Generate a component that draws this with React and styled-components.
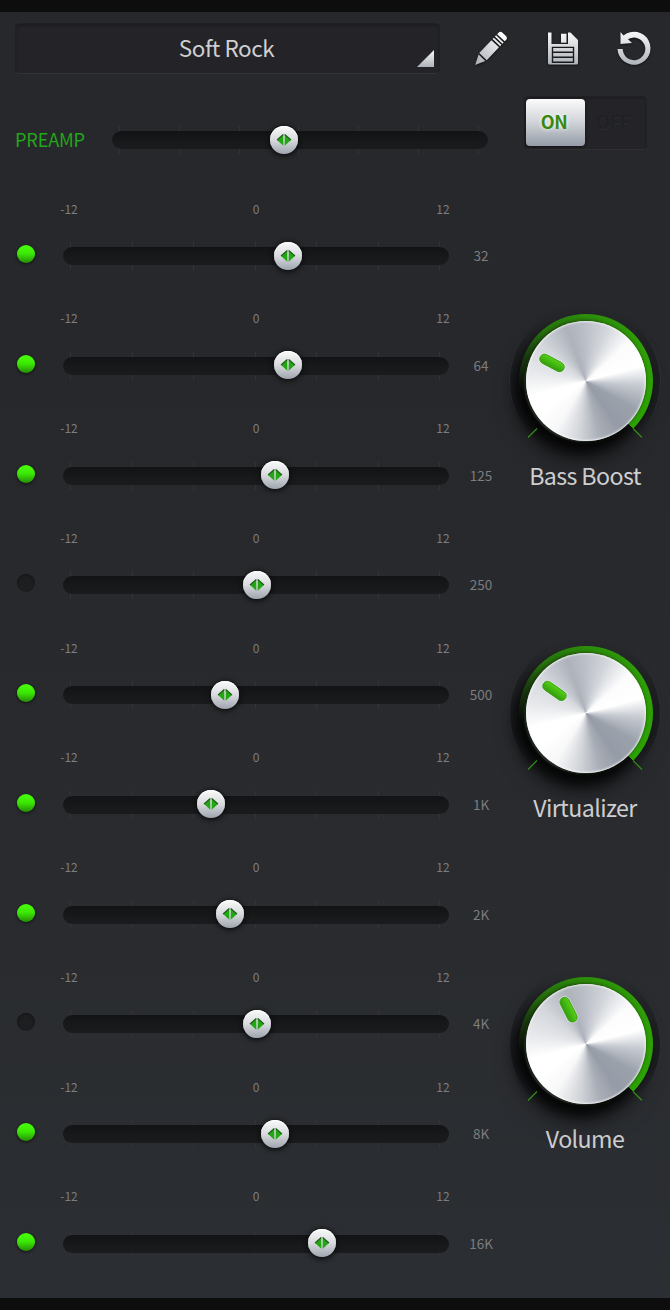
import React from "react";
import styled, { createGlobalStyle } from "styled-components";

const Global = createGlobalStyle`
  * { box-sizing: border-box; }
  body { margin: 0; background: #0d0d0d; }
`;

const Screen = styled.main`
  width: 670px;
  height: 1310px;
  display: flex;
  flex-direction: column;
  border-top: 12px solid #0d0d0d;
  border-bottom: 12px solid #0d0d0d;
  background: linear-gradient(#27282b, #27282b 30%, #2b2e32);
  background-clip: padding-box;
  font-family: "Noto Sans CJK SC", "Noto Sans", sans-serif;
  color: #cfcfd1;
  overflow: hidden;
`;

const Header = styled.header`
  display: flex;
  align-items: center;
  padding: 11px 19px 0 15px;
  height: 62px;
`;

const Preset = styled.button`
  display: grid;
  width: 425px;
  height: 51px;
  padding: 0;
  border: 1px solid #202024;
  border-bottom-color: #343438;
  border-radius: 5px;
  background: #242428;
  box-shadow: inset 0 2px 2px #1e1e21;
  color: inherit;
  font: 400 22.5px/46px "Noto Sans CJK SC", sans-serif;
  letter-spacing: -0.45px;
  text-align: center;
`;

const PresetName = styled.span`
  grid-area: 1 / 1;
  height: 49px;
  padding-right: 2px;
`;

const Corner = styled.svg`
  grid-area: 1 / 1;
  align-self: end;
  justify-self: end;
  margin: 0 5px 6px 0;
`;

const Actions = styled.div`
  display: flex;
  flex: 1;
  justify-content: space-between;
  padding-left: 34px;
`;

const Icon = styled.svg`
  display: block;
  overflow: visible;
  filter: drop-shadow(0 1px 1px #111);
`;

const Body = styled.div`
  display: flex;
  flex: 1;
`;

const Bands = styled.section`
  width: 506px;
  padding-top: 50px;
`;

const Side = styled.aside`
  flex: 1;
  padding-top: 22px;
`;

const PreampRow = styled.div`
  display: flex;
  align-items: center;
  height: 32px;
  padding-left: 15px;
`;

const PreampLabel = styled.span`
  width: 97px;
  margin-top: -2px;
  color: #23a61a;
  font-size: 18.2px;
  letter-spacing: -0.2px;
  line-height: 30px;
`;

const BandList = styled.div`
  padding-top: 40px;
`;

const Band = styled.div`
  display: grid;
  grid-template-columns: 63px 386px 57px;
  grid-template-rows: 32px 32px;
  row-gap: 12px;
  height: 109.76px;
`;

const Scale = styled.div`
  grid-column: 2;
  display: grid;
  grid-template-columns: 12px 1fr 12px;
  align-items: center;
  justify-items: center;
  height: 25px;
  color: #7c7d80;
  font-size: 12px;
  line-height: 16px;
  white-space: nowrap;
`;

const Led = styled.i`
  grid-row: 2;
  width: 18px;
  height: 18px;
  margin: 5px 0 0 17.4px;
  border-radius: 50%;
  background: ${(p) =>
    p.$on ? "linear-gradient(#45fb08 15%, #3be505 50%, #248d05)" : "#1d1e20"};
  box-shadow: ${(p) =>
    p.$on ? "0 1px 3px #111" : "inset 0 1px 2px #111214, 0 1px 0 #2d2e31"};
`;

const Freq = styled.span`
  grid-row: 2;
  grid-column: 3;
  justify-self: center;
  align-self: center;
  margin: -2px 0 0 7px;
  color: #7c7d80;
  font-size: 13.5px;
  line-height: 20px;
`;

const SliderBox = styled.div`
  grid-row: ${(p) => p.$row};
  display: grid;
  align-items: center;
  width: ${(p) => p.$width}px;
  height: 32px;
`;

const Ticks = styled.div`
  grid-area: 1 / 1;
  display: flex;
  justify-content: space-between;
  padding: 0 9px 0 7px;
`;

const Tick = styled.i`
  width: 1px;
  height: 28px;
  background: #323336;
`;

const Track = styled.div`
  grid-area: 1 / 1;
  height: 18px;
  border-radius: 9px;
  background: linear-gradient(#121315, #18191b 60%, #1a1b1d);
`;

const Thumb = styled.div`
  grid-area: 1 / 1;
  display: grid;
  place-items: center;
  width: 28px;
  height: 28px;
  margin-top: -1px;
  border-radius: 50%;
  background: linear-gradient(#fafafa, #d8dadd 50%, #9fa4ae);
  box-shadow: 0 1px 5px 1px #0b0c0d, inset 0 1px 0 #fff;
`;

const Switch = styled.div`
  display: flex;
  width: 123px;
  height: 54px;
  margin-left: 18px;
  padding: 3px 1px;
  border: 1px solid #202124;
  border-bottom-color: #303134;
  border-radius: 5px;
  background: #242428;
  box-shadow: inset 0 1px 2px #1d1d20;
`;

const SwitchSide = styled.span`
  width: 59px;
  height: 47px;
  margin-top: -1px;
  border-radius: 4px;
  font-size: 18px;
  font-weight: 700;
  letter-spacing: -0.3px;
  line-height: 45px;
  padding-right: 3px;
  text-align: center;
  color: ${(p) => (p.$active ? "#37880f" : "#202124")};
  background: ${(p) =>
    p.$active ? "linear-gradient(#fbfbfb, #d0d3d8 50%, #959ca7)" : "none"};
  box-shadow: ${(p) => (p.$active ? "0 1px 3px #111" : "none")};
  text-shadow: ${(p) => (p.$active ? "0 0 4px #fff" : "0 1px 0 #2c2d30")};
`;

const Knobs = styled.div`
  display: flex;
  flex-direction: column;
  padding-top: 155px;
`;

const KnobBlock = styled.figure`
  display: flex;
  flex-direction: column;
  align-items: center;
  height: 331.7px;
  margin: 0;
  padding-right: 7px;
`;

const Dial = styled.div`
  display: grid;
  place-items: center;
  width: 152px;
  height: 152px;
  > * { grid-area: 1 / 1; z-index: 1; }
`;

const Well = styled.div`
  width: 152px;
  height: 152px;
  border-radius: 50%;
  border: 1px solid #303236;
  background: #1d1e21;
  mask-image: conic-gradient(transparent 30deg, #000 85deg, #000 105deg, transparent 135deg, transparent 225deg, #000 255deg, #000 275deg, transparent 330deg);
`;

const Arc = styled.div`
  width: 134px;
  height: 134px;
  margin-left: 2px;
  border-radius: 50%;
  background: conic-gradient(#2c8f0a, #2f9e07 60deg, #2ba303 135deg, transparent 135.5deg, transparent 262deg, rgba(28, 74, 14, 0.7) 290deg, #27740c 320deg, #2c8f0a);
`;

const Shade = styled.div`
  width: 118px;
  height: 118px;
  border-radius: 50%;
  margin: 4px 4px 0 0;
  box-shadow: -2px 5px 12px 6px rgba(0, 0, 0, 0.75), -2px 12px 22px 4px rgba(0, 0, 0, 0.5);
`;

const Face = styled.div`
  width: 120px;
  height: 120px;
  margin-left: 2px;
  border-radius: 50%;
  background: conic-gradient(
    #bcc0c8, #d3d6db 22deg, #fcfcfd 48deg, #fff 75deg, #c5c9d0 95deg,
    #9ba1ab 120deg, #969ca7 145deg, #a8adb6 165deg, #cfd2d7 185deg,
    #f8f8f9 212deg, #fff 235deg, #fff 255deg, #e6e8eb 280deg,
    #d3d6db 310deg, #adb2bb 340deg, #bcc0c8
  );
  box-shadow: inset 0 0 2px 1px rgba(250, 250, 250, 0.8), -1px 0 4px #16240f;
`;

const Marks = styled.svg`
  width: 152px;
  height: 152px;
  overflow: visible;
`;

const KnobName = styled.figcaption`
  margin-top: 1px;
  padding-left: 1px;
  font-size: 23.2px;
  letter-spacing: -0.6px;
  line-height: 34px;
  white-space: nowrap;
`;

const bands = [
  ["32", 224.5],
  ["64", 224.5],
  ["125", 212],
  ["250", 193.5],
  ["500", 161.5],
  ["1K", 147.5],
  ["2K", 166.5],
  ["4K", 193.5],
  ["8K", 212],
  ["16K", 259],
];

const knobs = [
  ["Bass Boost", -62],
  ["Virtualizer", -55],
  ["Volume", -27],
];

function Slider({ width, at, row }) {
  return (
    <SliderBox $width={width} $row={row}>
      <Ticks>
        {Array.from({ length: 7 }, (_, i) => (
          <Tick key={i} />
        ))}
      </Ticks>
      <Track />
      <Thumb style={{ marginLeft: at - 14 }}>
        <svg width="16" height="12" viewBox="0 0 16 12">
          <path d="M7.300 .2v11.600L1 6zM8.700 .2v11.600L15 6z" fill="#23a614" />
          <path d="M7.300 .5 1 6M8.700 .5 15 6" stroke="#235a20" strokeWidth="1.100" />
        </svg>
      </Thumb>
    </SliderBox>
  );
}

function Knob({ name, angle }) {
  return (
    <KnobBlock>
      <Dial>
        <Well />
        <Shade />
        <Arc />
        <Face />
        <Marks viewBox="0 0 152 152">
          <defs>
            <linearGradient id="pill" x1="0" x2="1">
              <stop stopColor="#329d0b" />
              <stop offset="1" stopColor="#56d018" />
            </linearGradient>
          </defs>
          <path d="M19 132.500l9-9M124 123.500l9 9" stroke="#318c17" strokeWidth="1.200" />
          <g transform={`rotate(${angle} 77 76)`}>
            <rect x="71" y="23" width="12" height="29" rx="6" fill="#eef0f0" opacity=".55" />
            <rect x="72.200" y="24.200" width="9.600" height="26.600" rx="4.800" fill="url(#pill)" stroke="#3c9c17" strokeWidth=".8" />
          </g>
        </Marks>
      </Dial>
      <KnobName>{name}</KnobName>
    </KnobBlock>
  );
}

export default function App() {
  return (
    <>
      <Global />
      <Screen>
        <Header>
          <Preset>
            <PresetName>Soft Rock</PresetName>
            <Corner width="17" height="17" viewBox="0 0 17 17">
              <defs>
                <linearGradient id="metal" x2="0" y2="1">
                  <stop stopColor="#f8f8f8" />
                  <stop offset="1" stopColor="#aeb3ba" />
                </linearGradient>
              </defs>
              <path d="M17 0v17H0z" fill="url(#metal)" />
            </Corner>
          </Preset>
          <Actions>
            <Icon width="34" height="34" viewBox="0 0 34 34">
              <defs>
                <linearGradient id="pencil" gradientUnits="userSpaceOnUse" x1="0" y1="0" x2="0" y2="42">
                  <stop stopColor="#fff" />
                  <stop offset="1" stopColor="#a7abb2" />
                </linearGradient>
              </defs>
              <g transform="translate(30 2.500) rotate(43.500)" fill="url(#pencil)">
                <path d="M-5.200 4.500V2.500Q-5.200-.300-2-.300H2Q5.200-.300 5.200 2.500V4.500zM-5.200 6h10.400v1.800h-10.400zM-5.200 9.300h10.400v1.800h-10.400zM-5.200 12.800h10.400V30.500h-10.400zM-4.600 32h9.200L0 42z" />
              </g>
            </Icon>
            <Icon width="30" height="34" viewBox="0 0 30 34">
              <path
                fill="url(#metal)"
                fillRule="evenodd"
                d="M0 0.500h3.500v11.500H20V0.500h2.500L30 8V31Q30 32.500 28.500 32.500H1.500Q0 32.500 0 31zM3.800 14.700V31H26.200V14.700zM13 1.700h5.500v9H13zM5.200 16.100H24.800V19.500H5.200zM5.200 21.100H24.800V24.500H5.200zM5.200 26.100H24.800V29.600H5.200z"
              />
            </Icon>
            <Icon width="34" height="34" viewBox="0 0 34 34">
              <path
                fill="url(#metal)"
                d="M3.500 0 6.500 3.500A16.500 16.500 0 1 1 .5 17H5.700A11.300 11.300 0 1 0 11 7.300L15 11 3.500 12z"
              />
            </Icon>
          </Actions>
        </Header>
        <Body>
          <Bands>
            <PreampRow>
              <PreampLabel>PREAMP</PreampLabel>
              <Slider width={376} at={172.4} row="auto" />
            </PreampRow>
            <BandList>
              {bands.map(([freq, at], i) => (
                <Band key={freq}>
                  <Scale>
                    <span>-12</span>
                    <span>0</span>
                    <span>12</span>
                  </Scale>
                  <Led $on={i !== 3 && i !== 7} />
                  <Slider width={386} at={at} row={2} />
                  <Freq>{freq}</Freq>
                </Band>
              ))}
            </BandList>
          </Bands>
          <Side>
            <Switch>
              <SwitchSide $active>ON</SwitchSide>
              <SwitchSide>OFF</SwitchSide>
            </Switch>
            <Knobs>
              {knobs.map(([name, angle]) => (
                <Knob key={name} name={name} angle={angle} />
              ))}
            </Knobs>
          </Side>
        </Body>
      </Screen>
    </>
  );
}
